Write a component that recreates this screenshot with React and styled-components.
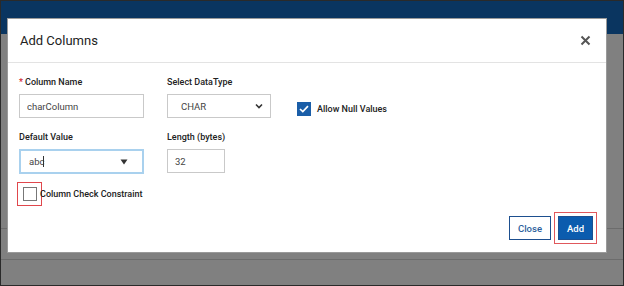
import React, { useState } from 'react'
import styled, { createGlobalStyle } from 'styled-components'

const GlobalStyle = createGlobalStyle`
  html, body { margin: 0; padding: 0; }
  body { font-family: Roboto, "Liberation Sans", Arial, sans-serif; }
`

const Page = styled.div`
  position: relative;
  width: 624px;
  height: 286px;
  box-sizing: border-box;
  border: 1px solid #2a2a2a;
  background: #808080;
  overflow: hidden;
`

const TopBar = styled.div`
  height: 33px;
  background: #0a3560;
`

const BackRows = styled.div`
  display: flex;
  flex-direction: column;
  padding-top: 164px;
`

const BackRow = styled.div`
  height: 30px;
  border-bottom: 1px solid #6c6c6c;
`

const Modal = styled.div`
  position: absolute;
  left: 6px;
  top: 17px;
  width: 600px;
  height: 235px;
  background: #fff;
  border: 1px solid #9a9a9a;
  box-sizing: border-box;
  display: flex;
  flex-direction: column;
`

const Header = styled.div`
  height: 43px;
  display: flex;
  align-items: center;
  justify-content: space-between;
  padding: 0 14px 0 12px;
  border-bottom: 1px solid #e3e3e3;
`

const Title = styled.h2`
  margin: 0;
  font-size: 13px;
  font-weight: 400;
  color: #222;
`

const CloseX = styled.button`
  border: 0;
  background: none;
  padding: 0;
  width: 12px;
  height: 12px;
  cursor: pointer;
  display: flex;
`

const Body = styled.div`
  padding: 13px 0 0 11px;
  display: grid;
  grid-template-columns: 125px 104px auto;
  column-gap: 23px;
  align-items: start;
`

const Field = styled.div`
  display: flex;
  flex-direction: column;
  gap: 6px;
  margin-bottom: ${p => p.$mb || 0}px;
`

const Label = styled.label`
  font-size: 9px;
  font-weight: 500;
  color: #222;
  line-height: 12px;
`

const Req = styled.span`
  color: #d0212b;
  margin-right: 2px;
`

const TextInput = styled.input`
  box-sizing: border-box;
  width: ${p => p.$w || 125}px;
  height: 24px;
  border: 1px solid #c9c9c9;
  padding: 0 7px;
  font-family: inherit;
  font-size: 9.5px;
  color: #444;
  outline: none;
`

const SelectBox = styled.div`
  box-sizing: border-box;
  width: ${p => p.$w}px;
  height: ${p => (p.$focus ? 25 : 24)}px;
  border: ${p => (p.$focus ? '2px solid #a9d1ee' : '1px solid #c9c9c9')};
  display: flex;
  align-items: center;
  justify-content: space-between;
  padding: ${p => (p.$focus ? '0 8px 0 8px' : '0 7px 0 13px')};
  font-size: 9.5px;
  color: #444;
`

const Caret = styled.span`
  display: inline-block;
  width: 1px;
  height: 11px;
  background: #333;
  margin-left: -1px;
  vertical-align: middle;
`

const NullCheck = styled.div`
  display: flex;
  align-items: center;
  gap: 6px;
  margin-top: 26px;
  margin-left: 3px;
  font-size: 9px;
  font-weight: 500;
  color: #222;
`

const Box = styled.span`
  box-sizing: border-box;
  width: 14px;
  height: 14px;
  display: flex;
  align-items: center;
  justify-content: center;
  background: ${p => (p.$on ? '#1a5ea8' : '#fff')};
  border: ${p => (p.$on ? 'none' : '1.5px solid #777')};
`

const ConstraintRow = styled.div`
  grid-column: 1 / span 3;
  display: flex;
  align-items: center;
  margin: 8px 0 0 -2px;
  font-size: 9px;
  font-weight: 500;
  color: #222;
`

const Highlight = styled.span`
  box-sizing: border-box;
  width: 25px;
  height: 24px;
  border: 1px solid #e0474c;
  display: flex;
  align-items: center;
  justify-content: center;
  margin-right: -2px;
`

const Footer = styled.div`
  margin-top: auto;
  display: flex;
  justify-content: flex-end;
  align-items: center;
  gap: 3px;
  padding: 0 9px 8px 0;
`

const Btn = styled.button`
  box-sizing: border-box;
  width: ${p => (p.$primary ? 35 : 42)}px;
  height: 24px;
  padding: 0;
  font-family: inherit;
  font-size: 9.5px;
  font-weight: 500;
  border: 1px solid #1d4f8f;
  background: ${p => (p.$primary ? '#0c5cae' : '#fff')};
  color: ${p => (p.$primary ? '#fff' : '#2b5f9c')};
  cursor: pointer;
`

const AddRing = styled.span`
  box-sizing: border-box;
  border: 1px solid #e0585c;
  padding: 3px;
  display: flex;
`

export default function App() {
  const [name, setName] = useState('charColumn')
  const [len, setLen] = useState('32')
  const [allowNull, setAllowNull] = useState(true)

  return (
    <>
      <GlobalStyle />
      <Page>
        <TopBar />
        <BackRows>
          <BackRow />
          <BackRow />
        </BackRows>
        <Modal>
          <Header>
            <Title>Add Columns</Title>
            <CloseX aria-label="close">
              <svg width="11" height="11" viewBox="0 0 11 11">
                <path d="M1.5 1.5 L9.5 9.5 M9.5 1.5 L1.5 9.5" stroke="#555" strokeWidth="2" />
              </svg>
            </CloseX>
          </Header>
          <Body>
            <Field $mb={13}>
              <Label><Req>*</Req>Column Name</Label>
              <TextInput value={name} onChange={e => setName(e.target.value)} />
            </Field>
            <Field $mb={13}>
              <Label>Select DataType</Label>
              <SelectBox $w={104}>
                <span>CHAR</span>
                <svg width="8" height="6" viewBox="0 0 8 6">
                  <path d="M1 1.5 L4 4.5 L7 1.5" stroke="#333" strokeWidth="1.6" fill="none" />
                </svg>
              </SelectBox>
            </Field>
            <NullCheck onClick={() => setAllowNull(!allowNull)}>
              <Box $on={allowNull}>
                {allowNull && (
                  <svg width="10" height="8" viewBox="0 0 10 8">
                    <path d="M1 4 L3.8 6.6 L9 1.2" stroke="#fff" strokeWidth="1.7" fill="none" />
                  </svg>
                )}
              </Box>
              Allow Null Values
            </NullCheck>
            <Field>
              <Label>Default Value</Label>
              <SelectBox $w={125} $focus>
                <span>abc<Caret /></span>
                <svg width="8" height="6" viewBox="0 0 8 6" style={{ marginRight: 6 }}>
                  <path d="M0.5 0.5 H7.5 L4 5.5 Z" fill="#333" />
                </svg>
              </SelectBox>
            </Field>
            <Field>
              <Label>Length (bytes)</Label>
              <TextInput $w={58} value={len} onChange={e => setLen(e.target.value)} />
            </Field>
            <div />
            <ConstraintRow>
              <Highlight>
                <Box />
              </Highlight>
              Column Check Constraint
            </ConstraintRow>
          </Body>
          <Footer>
            <Btn>Close</Btn>
            <AddRing>
              <Btn $primary>Add</Btn>
            </AddRing>
          </Footer>
        </Modal>
      </Page>
    </>
  )
}
